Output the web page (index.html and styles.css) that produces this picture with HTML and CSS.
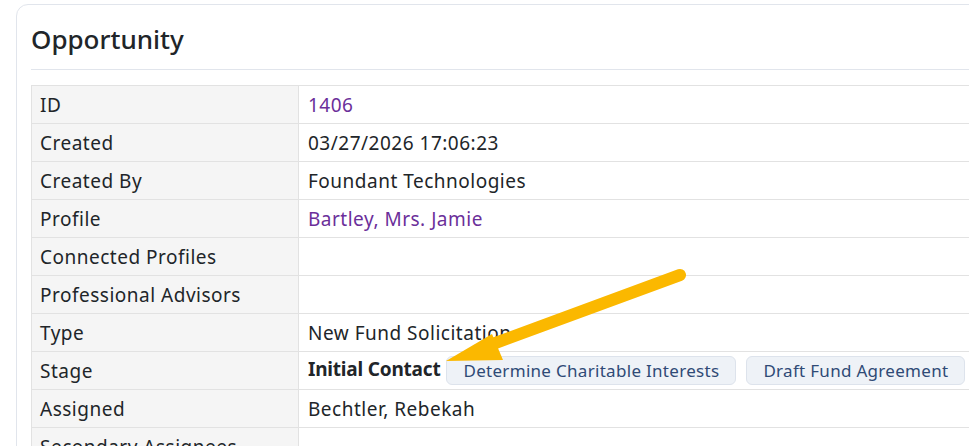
FILE: index.html
```html
<!DOCTYPE html>
<html>
<head>
<meta charset="utf-8">
<link rel="stylesheet" href="styles.css">
</head>
<body>
<div class="card">
  <h1 class="title">Opportunity</h1>
  <hr class="rule">
  <table class="details">
    <tr><th>ID</th><td><a class="link" href="#">1406</a></td></tr>
    <tr><th>Created</th><td>03/27/2026 17:06:23</td></tr>
    <tr><th>Created By</th><td>Foundant Technologies</td></tr>
    <tr><th>Profile</th><td><a class="link" href="#">Bartley, Mrs. Jamie</a></td></tr>
    <tr><th>Connected Profiles</th><td></td></tr>
    <tr><th>Professional Advisors</th><td></td></tr>
    <tr><th>Type</th><td>New Fund Solicitation</td></tr>
    <tr><th>Stage</th><td class="stage"><strong>Initial Contact</strong><button class="step">Determine Charitable Interests</button><button class="step">Draft Fund Agreement</button></td></tr>
    <tr><th>Assigned</th><td>Bechtler, Rebekah</td></tr>
    <tr><th>Secondary Assignees</th><td></td></tr>
  </table>
</div>
<svg class="arrow" width="969" height="446" viewBox="0 0 969 446">
  <line x1="680" y1="275" x2="490" y2="345" stroke="#fbb800" stroke-width="12" stroke-linecap="round"/>
  <polygon points="446,361 492,334 503,360" fill="#fbb800"/>
</svg>
</body>
</html>
```
FILE: styles.css
```css
html, body {
  margin: 0;
  padding: 0;
  background: #fff;
  overflow: hidden;
  height: 446px;
}
body {
  font-family: "Noto Sans", "Open Sans", sans-serif;
  color: #212529;
  padding: 4px 0 0 16px;
  box-sizing: border-box;
}
.card {
  width: 1000px;
  border: 1px solid #e1e5ec;
  border-radius: 12px;
  padding: 14px 0 0 14px;
  height: 600px;
  box-sizing: border-box;
}
.title {
  margin: 0;
  font-size: 26px;
  font-weight: 500;
  line-height: 41px;
  color: #212529;
}
.rule {
  margin: 9px 0 15px 0;
  border: 0;
  border-top: 1px solid #e1e5ec;
}
.details {
  border-collapse: collapse;
  font-size: 19px;
  letter-spacing: 0.5px;
  width: 1100px;
}
.details th, .details td {
  border: 1px solid #e2e2e2;
  height: 38px;
  padding: 0 9px;
  text-align: left;
  font-weight: 400;
  line-height: 20px;
  box-sizing: border-box;
  white-space: nowrap;
}
.details th {
  width: 267px;
  padding-left: 8px;
  background: #f5f5f5;
}
.link {
  color: #6b2f9a;
  text-decoration: none;
}
.stage strong {
  font-weight: 700;
  letter-spacing: -0.2px;
}
.step {
  font-family: inherit;
  font-size: 17px;
  letter-spacing: 0.3px;
  color: #2f4a76;
  background: #eef2f7;
  border: 1px solid #dde3ec;
  border-radius: 6px;
  height: 29px;
  padding: 0 16px;
  margin-left: 6px;
  vertical-align: middle;
}
.step + .step {
  margin-left: 10px;
}
.arrow {
  position: absolute;
  left: 0;
  top: 0;
  pointer-events: none;
}
```
